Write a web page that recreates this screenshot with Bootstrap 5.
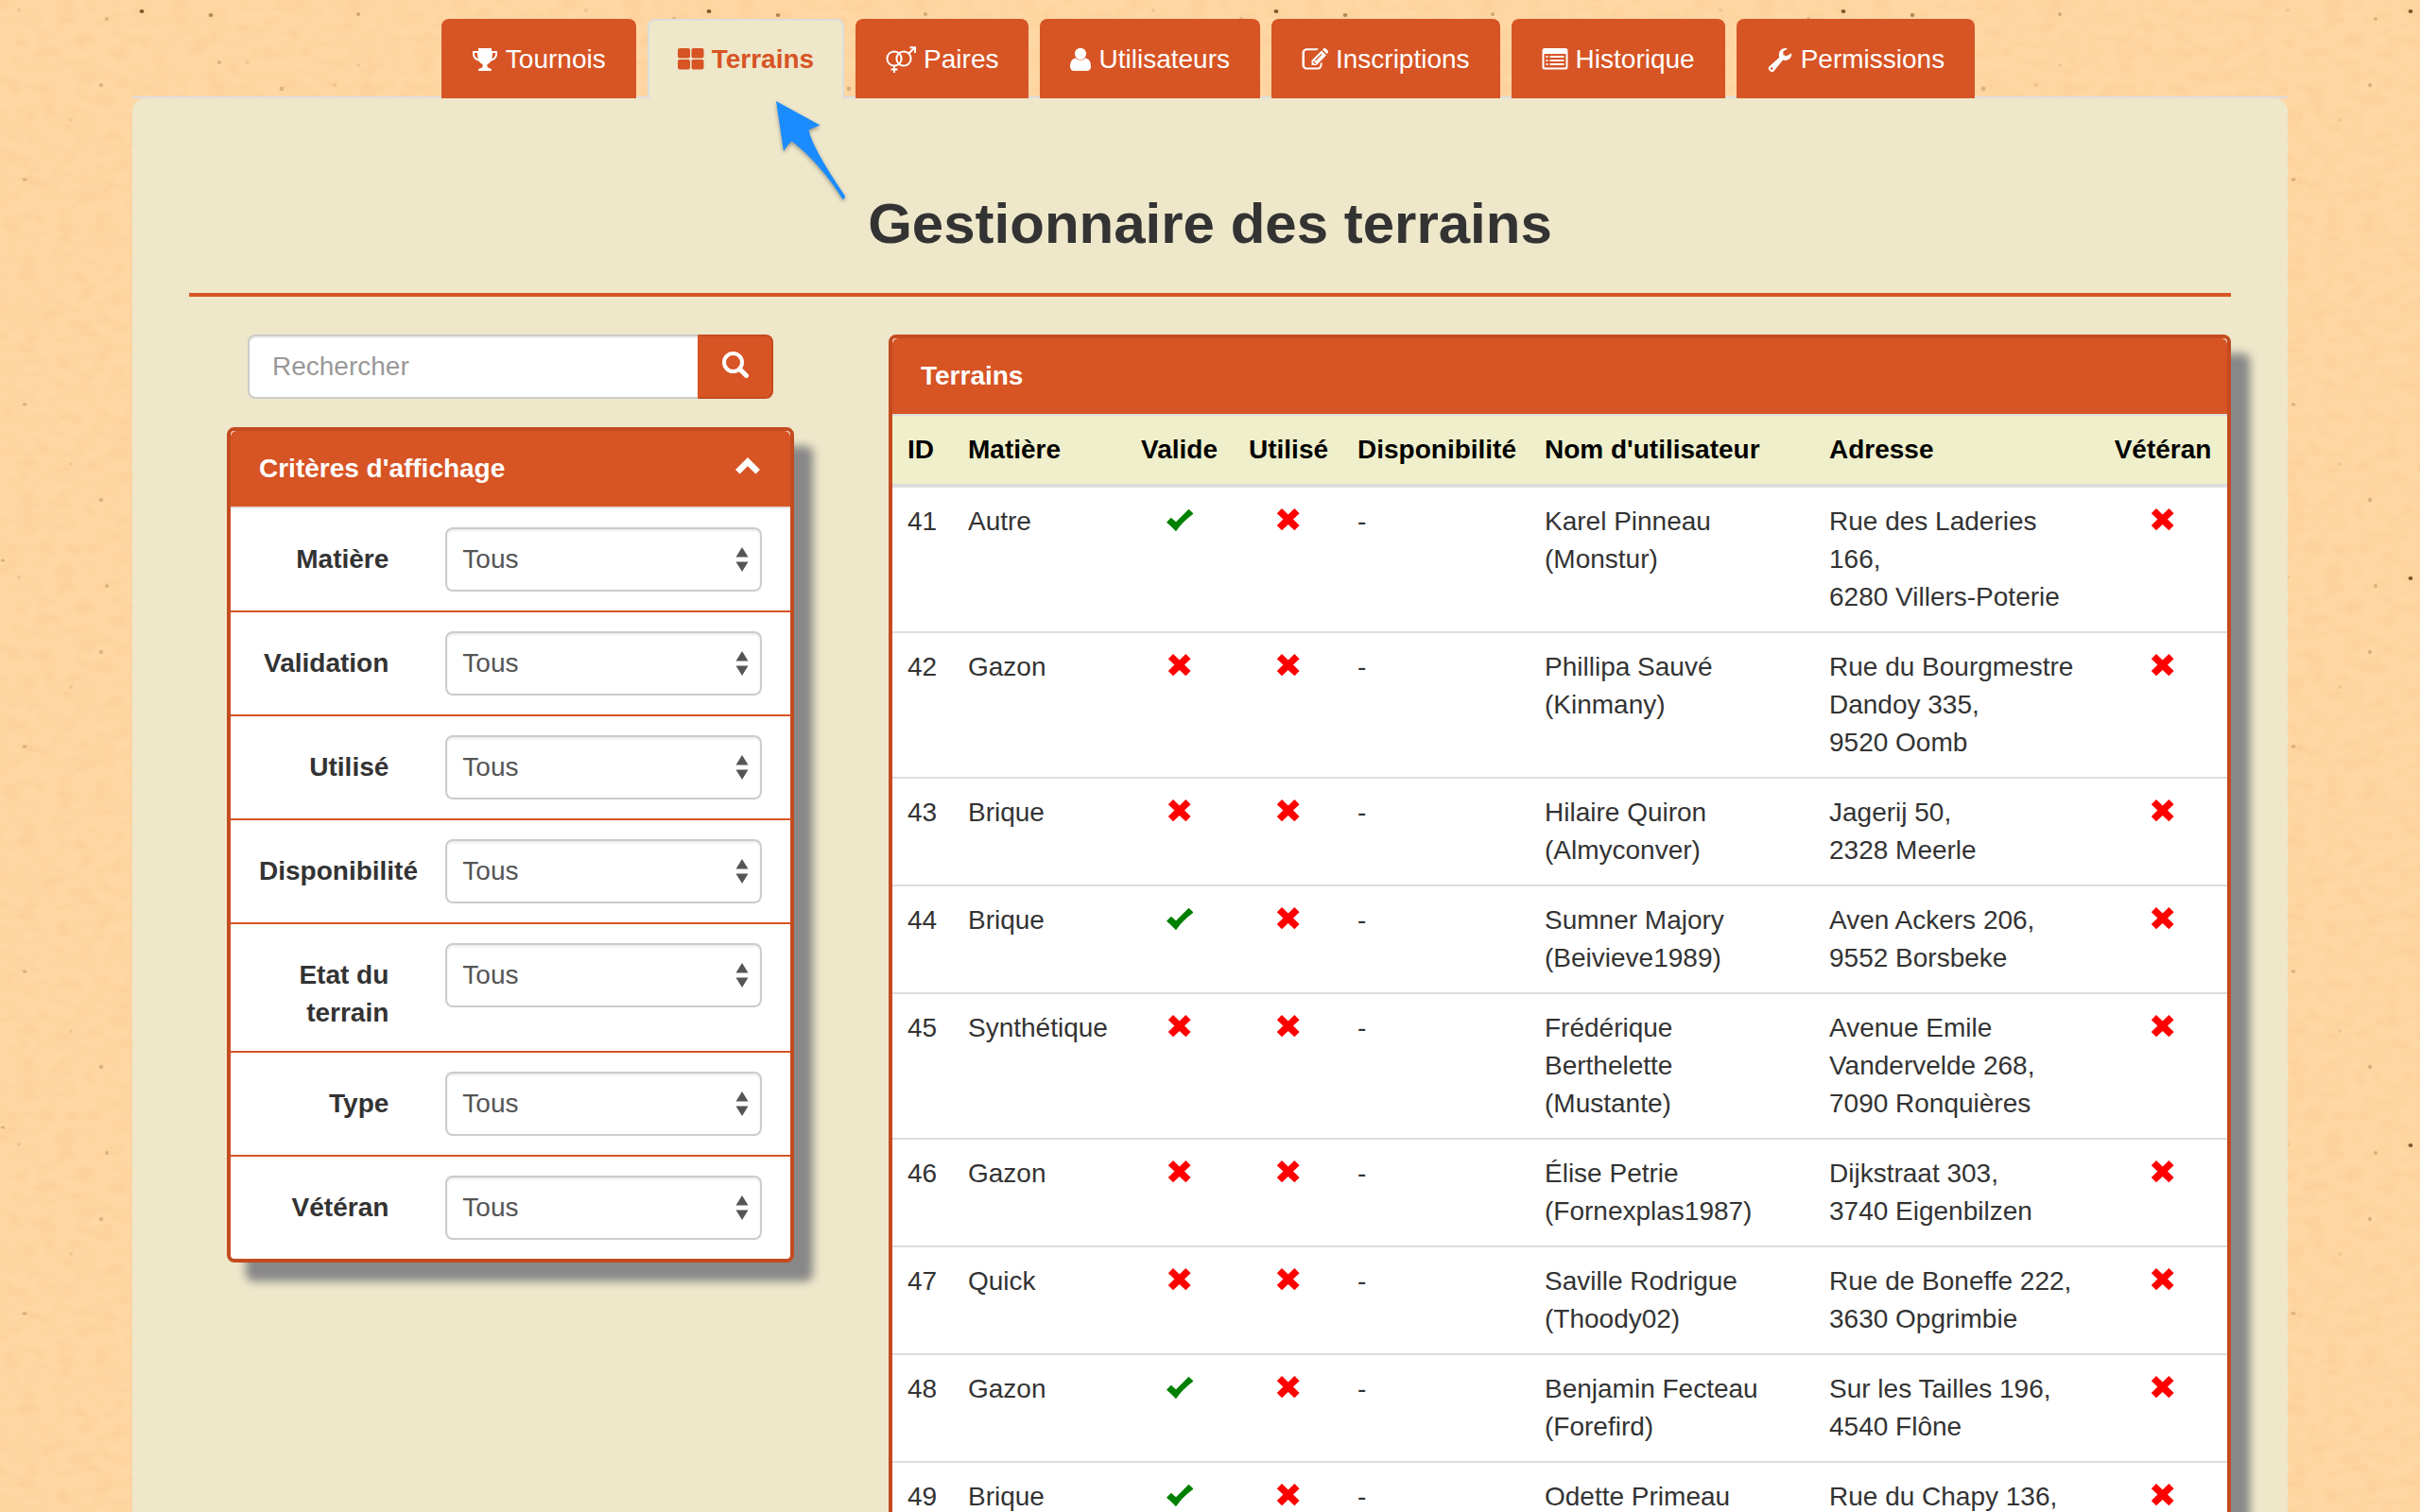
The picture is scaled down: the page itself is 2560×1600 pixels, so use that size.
<!DOCTYPE html>
<html lang="fr">
<head>
<meta charset="utf-8">
<meta name="viewport" content="width=device-width, initial-scale=1">
<title>Gestionnaire des terrains</title>
<link href="https://cdn.jsdelivr.net/npm/bootstrap@5.3.0/dist/css/bootstrap.min.css" rel="stylesheet">
<style>
:root { --brick: #d75424; --brick-dark: #c44b20; --sand: #eee7ca; --rule: #ddd; }
body {
  height: 100vh; overflow: hidden;
  font-family: "Liberation Sans", Arial, sans-serif; font-size: 28px; line-height: 40px; color: #333;
  background: #ffd7a4 url("data:image/svg+xml,%3Csvg xmlns='http://www.w3.org/2000/svg' width='600' height='600'%3E%3Cfilter id='n' x='0' y='0' width='100%25' height='100%25' color-interpolation-filters='sRGB'%3E%3CfeTurbulence type='fractalNoise' baseFrequency='.05 .08' numOctaves='4' seed='4' stitchTiles='stitch'/%3E%3CfeColorMatrix values='0 0 0 0 .95 0 0 0 0 .7 0 0 0 0 .45 1.6 0 0 0 -.6'/%3E%3C/filter%3E%3Crect width='600' height='600' filter='url(%23n)' opacity='.25'/%3E%3Cg fill='%23805020'%3E%3Cellipse cx='150' cy='12' rx='2.4' ry='2' fill='%23603810' opacity='.8'/%3E%3Cellipse cx='223' cy='16' rx='2.3' ry='2' opacity='.6'/%3E%3Cellipse cx='379' cy='15' rx='2.2' ry='2' opacity='.35'/%3E%3Cg opacity='.28'%3E%3Ccircle cx='113' cy='20' r='2'/%3E%3Ccircle cx='107' cy='90' r='2.2'/%3E%3Ccircle cx='107' cy='529' r='2.2'/%3E%3Cellipse cx='26' cy='190' rx='2.6' ry='1.8'/%3E%3Cellipse cx='26' cy='428' rx='2.6' ry='1.8'/%3E%3Ccircle cx='232' cy='66' r='2'/%3E%3Ccircle cx='298' cy='94' r='2.4'/%3E%3Cellipse cx='3' cy='593' rx='2.4' ry='1.6'/%3E%3C/g%3E%3Cg opacity='.12'%3E%3Ccircle cx='262' cy='66' r='2'/%3E%3Ccircle cx='379' cy='69' r='2'/%3E%3Ccircle cx='354' cy='90' r='2'/%3E%3Ccircle cx='75' cy='127' r='2'/%3E%3Ccircle cx='75' cy='491' r='2'/%3E%3Ccircle cx='20' cy='11' r='2'/%3E%3C/g%3E%3C/g%3E%3C/svg%3E");
}
.site { margin: 0 140px; }
.ico { width: 28px; height: 28px; vertical-align: -4px; fill: currentColor; }
.ico-narrow { width: 22px; }
.ico-wide { width: 32px; }
.main-tabs { --bs-nav-tabs-border-width: 0; gap: 8px; padding-top: 20px; border-bottom: 2px solid var(--rule); flex-wrap: nowrap; }
.main-tabs .nav-item { margin-right: 4px; margin-bottom: -2px; }
.main-tabs .nav-link {
  display: flex; align-items: center; gap: 8px; height: 84px; padding: 0 30px; margin: 0; white-space: nowrap;
  color: #fff; background: var(--brick); border: 2px solid var(--brick); border-bottom: 0; border-radius: 8px 8px 0 0;
}
.main-tabs .nav-link.active { color: var(--brick); background: var(--sand); border-color: var(--rule); font-weight: bold; }
.pointer { position: absolute; left: 132px; top: 84px; width: 84px; height: 116px; z-index: 2; filter: drop-shadow(0 2px 2px rgba(0,0,0,.35)); }
.sheet { background: var(--sand); border-radius: 14px 14px 0 0; padding: 100px 60px 60px; min-height: 100vh; }
.page-title { font-size: 60px; line-height: 66px; font-weight: bold; margin: 0 0 40px; }
.title-rule { border: 0; border-top: 4px solid var(--brick); opacity: 1; margin: 0 0 40px; }
.wide-gutter { --bs-gutter-x: 60px; }
.search-box { margin: 0 62px 30px; width: auto; }
.search-box .form-control {
  height: 68px; font: inherit; color: #555; padding: 0 24px; border: 2px solid #ccc; border-right: 0; border-radius: 8px 0 0 8px;
  box-shadow: inset 0 2px 2px rgba(0,0,0,.075);
}
.search-box .form-control::placeholder { color: #999; }
.search-box .btn { width: 80px; padding: 0 0 4px; border: 2px solid var(--brick-dark); border-left-color: var(--brick); background: var(--brick); color: #fff; border-radius: 0 8px 8px 0; line-height: 1; }
.panel-box { background: #fff; border: 4px solid var(--brick-dark); border-radius: 8px; box-shadow: 20px 20px 10px #888; }
.panel-top { background: var(--brick); color: #fff; font-weight: bold; padding: 20px 30px; border-bottom: 2px solid var(--rule); border-radius: 6px 6px 0 0; }
.panel-top h2 { font: inherit; margin: 0; }
.panel-top button { border: 0; padding: 0 0 6px; background: none; color: #fff; line-height: 1; }
.filters { margin: 0 40px; }
.crit { padding: 20px 0; margin: 0; }
.crit + .crit { border-top: 2px solid var(--brick); }
.crit label { font-weight: bold; text-align: right; padding-top: 14px; }
.crit .form-select {
  height: 68px; font: inherit; color: #555; padding: 0 40px 0 16px; border: 2px solid #ccc; border-radius: 8px;
  box-shadow: inset 0 2px 2px rgba(0,0,0,.075);
  background: #fff url("data:image/svg+xml,%3Csvg xmlns='http://www.w3.org/2000/svg' width='14' height='26'%3E%3Cpath fill='%23555' d='M7 0l6.500 10.500H.5zM7 26l6.500-10.500H.5z'/%3E%3C/svg%3E") no-repeat right 12px center / 14px 26px;
}
.courts { table-layout: fixed; width: 100%; margin: 0; color: #333; }
.courts th, .courts td { padding: 16px; vertical-align: top; overflow-wrap: normal; }
.courts th { background: #efefcb; color: #000; white-space: nowrap; border-bottom: 4px solid var(--rule); }
.courts td { border-bottom: 2px solid var(--rule); }
.courts .ico { vertical-align: -3px; }
.yes { color: green; }
.courts .no { color: red; }
.c-id { width: 64px; } .c-kind { width: 182px; } .c-flag { width: 115px; } .c-free { width: 198px; } .c-text { width: 301px; } .c-vet { width: 136px; }
</style>
</head>
<body>
<svg class="d-none" aria-hidden="true">
  <symbol id="i-trophy" viewBox="0 0 28 28"><path d="M7 2h14v3h6v3c0 4-2.600 7-6.600 7.400-1 1.900-2.400 3-4 3.500v2.100c0 1.500 1.200 2 2.600 2.300 1.400.3 2 1.100 2 2.700H7c0-1.600.6-2.400 2-2.700 1.400-.3 2.600-.8 2.600-2.300v-2.100c-1.600-.5-3-1.600-4-3.500C3.600 15 1 12 1 8V5h6zM3 7v1c0 2.600 1.400 4.600 3.800 5.300C6.200 11.500 6 9.300 6 7zm19 0c0 2.300-.2 4.500-.8 6.300C23.600 12.600 25 10.600 25 8V7z"/></symbol>
  <symbol id="i-grid" viewBox="0 0 28 28"><rect x="0" y="2" width="13" height="10.500" rx="2"/><rect x="14.500" y="2" width="13" height="10.500" rx="2"/><rect x="0" y="14" width="13" height="10.500" rx="2"/><rect x="14.500" y="14" width="13" height="10.500" rx="2"/></symbol>
  <symbol id="i-pair" viewBox="0 0 32 28"><g fill="none" stroke="currentColor" stroke-width="2"><ellipse cx="9" cy="13" rx="7.600" ry="7.600"/><ellipse cx="19" cy="13" rx="7.600" ry="7.600"/><path d="M9 21v7M5.500 24.500h7M24.500 7.500L31 1M25.500 1.200H31V7"/></g></symbol>
  <symbol id="i-user" viewBox="0 0 22 28"><ellipse cx="11" cy="8" rx="6" ry="6.200"/><path d="M6 12.500c3 2.900 7 2.900 10 0 4 .5 6 4 6 9 0 2.700-1.800 4.500-4.200 4.500H4.200C1.800 26 0 24.200 0 21.500c0-5 2-8.500 6-9z"/></symbol>
  <symbol id="i-edit" viewBox="0 0 28 28"><path d="M18 2.200H5.500C3 2.200 .5 4.200 .5 6.700V20C.5 22.500 3 24.500 5.500 24.500H17c2.500 0 4.500-2 4.500-4.500V16.500l-2 2V20c0 1.400-1.100 2.500-2.500 2.500H5.500A2.500 2.500 0 0 1 3 20V6.700A2.500 2.500 0 0 1 5.500 4.200H16z"/><path fill-rule="evenodd" d="M21 4.500l5 5L15.500 20h-5v-5zM12 16v1.500h1.500V19l2-.6L12.600 15.500zM14 14.600l.8.800 6.700-6.700-.8-.8z"/><path d="M22 3.500l1-1c.8-.8 1.800-.8 2.600 0l2 2c.7.700.7 1.700 0 2.500l-1 1z"/></symbol>
  <symbol id="i-list" viewBox="0 0 28 28"><path fill-rule="evenodd" d="M3 2h22a2.500 2.500 0 0 1 2.500 2.500v17.500A2.500 2.500 0 0 1 25 24.500H3A2.500 2.500 0 0 1 .5 22V4.500A2.500 2.500 0 0 1 3 2zM2.500 8v14c0 .3.200.5.500.5h22c.3 0 .5-.2.500-.5V8z"/><path d="M4.500 10h2v2h-2zM8.500 10h15v2h-15zM4.500 14h2v2h-2zM8.500 14h15v2h-15zM4.500 18h2v2h-2zM8.500 18h15v2h-15z"/></symbol>
  <symbol id="i-wrench" viewBox="0 0 28 28"><path fill-rule="evenodd" d="M22 2.700l-4.600 2.600v3.500l3.100 1.700 5.200-3.100c.4 0 .6.300.6.700 0 3.800-3 6.900-6.700 6.900-.9 0-1.700-.1-2.500-.4L7.300 26.500c-1 1-2.500 1-3.500 0l-1.400-1.400c-1-1-1-2.500 0-3.500L13.200 11.700c-1.500-4.700 1.500-9.700 6.400-9.700.9 0 1.700.2 2.400.7zM5.200 22.200a1.300 1.300 0 1 0 0 2.600 1.300 1.300 0 0 0 0-2.600z"/></symbol>
  <symbol id="i-search" viewBox="0 0 28 28"><g fill="none" stroke="currentColor"><circle cx="11.500" cy="11.500" r="9.500" stroke-width="4"/><path d="M18.500 18.500l7 7" stroke-width="5" stroke-linecap="round"/></g></symbol>
  <symbol id="i-up" viewBox="0 0 28 28"><path d="M13 5L26 18l-4.600 4.600L13 14.200l-8.400 8.400L0 18z"/></symbol>
  <symbol id="i-yes" viewBox="0 0 28 28"><path d="M23.500 2.700L28.500 7.600Q17 16 10 26.200Q5 21 0 16.800L4.800 11.800L10 16.300z"/></symbol>
  <symbol id="i-no" viewBox="0 0 28 28"><path d="M7 2L13.700 8.400 20.400 2 25.600 7.300 19 13.600 25.600 20 20.400 25.200 13.700 18.900 7 25.200 1.800 20 8.400 13.600 1.800 7.300z"/></symbol>
</svg>

<div class="site">
  <nav aria-label="Sections">
    <ul class="nav nav-tabs main-tabs justify-content-center">
      <li class="nav-item"><a class="nav-link" href="#tournois"><svg class="ico"><use href="#i-trophy"/></svg>Tournois</a></li>
      <li class="nav-item position-relative"><a class="nav-link active" aria-current="page" href="#terrains"><svg class="ico"><use href="#i-grid"/></svg>Terrains</a>
        <svg class="pointer" viewBox="0 0 84 116" aria-hidden="true"><path fill="#1b8cff" d="M4 3L50.500 28.500Q44 31 38.500 33.500Q42 52 77 103.500Q77 106 74.500 107Q50 68 20.500 45.500Q15 50 12 56Q8 30 4 3z"/></svg>
      </li>
      <li class="nav-item"><a class="nav-link" href="#paires"><svg class="ico ico-wide"><use href="#i-pair"/></svg>Paires</a></li>
      <li class="nav-item"><a class="nav-link" href="#utilisateurs"><svg class="ico ico-narrow"><use href="#i-user"/></svg>Utilisateurs</a></li>
      <li class="nav-item"><a class="nav-link" href="#inscriptions"><svg class="ico"><use href="#i-edit"/></svg>Inscriptions</a></li>
      <li class="nav-item"><a class="nav-link" href="#historique"><svg class="ico"><use href="#i-list"/></svg>Historique</a></li>
      <li class="nav-item"><a class="nav-link" href="#permissions"><svg class="ico"><use href="#i-wrench"/></svg>Permissions</a></li>
    </ul>
  </nav>

  <main class="sheet">
    <h1 class="page-title text-center">Gestionnaire des terrains</h1>
    <hr class="title-rule">
    <div class="row wide-gutter">
      <div class="col-4">
        <form class="input-group search-box" role="search">
          <input type="search" class="form-control" placeholder="Rechercher" aria-label="Rechercher">
          <button class="btn" type="button" aria-label="Lancer la recherche"><svg class="ico"><use href="#i-search"/></svg></button>
        </form>
        <form class="panel-box filters">
          <div class="panel-top d-flex justify-content-between align-items-center">
            <h2>Critères d'affichage</h2>
            <button type="button" class="d-flex" aria-label="Replier"><svg class="ico"><use href="#i-up"/></svg></button>
          </div>
          <div class="row wide-gutter crit"><label class="col-4" for="f1">Matière</label><div class="col-8"><select class="form-select" id="f1"><option>Tous</option></select></div></div>
          <div class="row wide-gutter crit"><label class="col-4" for="f2">Validation</label><div class="col-8"><select class="form-select" id="f2"><option>Tous</option></select></div></div>
          <div class="row wide-gutter crit"><label class="col-4" for="f3">Utilisé</label><div class="col-8"><select class="form-select" id="f3"><option>Tous</option></select></div></div>
          <div class="row wide-gutter crit"><label class="col-4" for="f4">Disponibilité</label><div class="col-8"><select class="form-select" id="f4"><option>Tous</option></select></div></div>
          <div class="row wide-gutter crit"><label class="col-4" for="f5">Etat du terrain</label><div class="col-8"><select class="form-select" id="f5"><option>Tous</option></select></div></div>
          <div class="row wide-gutter crit"><label class="col-4" for="f6">Type</label><div class="col-8"><select class="form-select" id="f6"><option>Tous</option></select></div></div>
          <div class="row wide-gutter crit"><label class="col-4" for="f7">Vétéran</label><div class="col-8"><select class="form-select" id="f7"><option>Tous</option></select></div></div>
        </form>
      </div>
      <div class="col-8">
        <section class="panel-box">
          <div class="panel-top"><h2>Terrains</h2></div>
          <table class="courts">
            <colgroup><col class="c-id"><col class="c-kind"><col class="c-flag"><col class="c-flag"><col class="c-free"><col class="c-text"><col class="c-text"><col class="c-vet"></colgroup>
            <thead><tr><th>ID</th><th>Matière</th><th class="text-center">Valide</th><th class="text-center">Utilisé</th><th>Disponibilité</th><th>Nom d'utilisateur</th><th>Adresse</th><th class="text-center">Vétéran</th></tr></thead>
            <tbody>
              <tr><td>41</td><td>Autre</td><td class="text-center yes"><svg class="ico"><use href="#i-yes"/></svg></td><td class="text-center no"><svg class="ico"><use href="#i-no"/></svg></td><td>-</td><td>Karel Pinneau (Monstur)</td><td>Rue des Laderies 166,<br>6280 Villers-Poterie</td><td class="text-center no"><svg class="ico"><use href="#i-no"/></svg></td></tr>
              <tr><td>42</td><td>Gazon</td><td class="text-center no"><svg class="ico"><use href="#i-no"/></svg></td><td class="text-center no"><svg class="ico"><use href="#i-no"/></svg></td><td>-</td><td>Phillipa Sauvé (Kinmany)</td><td>Rue du Bourgmestre Dandoy 335,<br>9520 Oomb</td><td class="text-center no"><svg class="ico"><use href="#i-no"/></svg></td></tr>
              <tr><td>43</td><td>Brique</td><td class="text-center no"><svg class="ico"><use href="#i-no"/></svg></td><td class="text-center no"><svg class="ico"><use href="#i-no"/></svg></td><td>-</td><td>Hilaire Quiron (Almyconver)</td><td>Jagerij 50,<br>2328 Meerle</td><td class="text-center no"><svg class="ico"><use href="#i-no"/></svg></td></tr>
              <tr><td>44</td><td>Brique</td><td class="text-center yes"><svg class="ico"><use href="#i-yes"/></svg></td><td class="text-center no"><svg class="ico"><use href="#i-no"/></svg></td><td>-</td><td>Sumner Majory (Beivieve1989)</td><td>Aven Ackers 206,<br>9552 Borsbeke</td><td class="text-center no"><svg class="ico"><use href="#i-no"/></svg></td></tr>
              <tr><td>45</td><td>Synthétique</td><td class="text-center no"><svg class="ico"><use href="#i-no"/></svg></td><td class="text-center no"><svg class="ico"><use href="#i-no"/></svg></td><td>-</td><td>Frédérique Berthelette (Mustante)</td><td>Avenue Emile Vandervelde 268,<br>7090 Ronquières</td><td class="text-center no"><svg class="ico"><use href="#i-no"/></svg></td></tr>
              <tr><td>46</td><td>Gazon</td><td class="text-center no"><svg class="ico"><use href="#i-no"/></svg></td><td class="text-center no"><svg class="ico"><use href="#i-no"/></svg></td><td>-</td><td>Élise Petrie (Fornexplas1987)</td><td>Dijkstraat 303,<br>3740 Eigenbilzen</td><td class="text-center no"><svg class="ico"><use href="#i-no"/></svg></td></tr>
              <tr><td>47</td><td>Quick</td><td class="text-center no"><svg class="ico"><use href="#i-no"/></svg></td><td class="text-center no"><svg class="ico"><use href="#i-no"/></svg></td><td>-</td><td>Saville Rodrigue (Thoody02)</td><td>Rue de Boneffe 222,<br>3630 Opgrimbie</td><td class="text-center no"><svg class="ico"><use href="#i-no"/></svg></td></tr>
              <tr><td>48</td><td>Gazon</td><td class="text-center yes"><svg class="ico"><use href="#i-yes"/></svg></td><td class="text-center no"><svg class="ico"><use href="#i-no"/></svg></td><td>-</td><td>Benjamin Fecteau (Forefird)</td><td>Sur les Tailles 196,<br>4540 Flône</td><td class="text-center no"><svg class="ico"><use href="#i-no"/></svg></td></tr>
              <tr><td>49</td><td>Brique</td><td class="text-center yes"><svg class="ico"><use href="#i-yes"/></svg></td><td class="text-center no"><svg class="ico"><use href="#i-no"/></svg></td><td>-</td><td>Odette Primeau</td><td>Rue du Chapy 136,</td><td class="text-center no"><svg class="ico"><use href="#i-no"/></svg></td></tr>
            </tbody>
          </table>
        </section>
      </div>
    </div>
  </main>
</div>
<script src="https://cdn.jsdelivr.net/npm/bootstrap@5.3.0/dist/js/bootstrap.bundle.min.js"></script>
</body>
</html>
